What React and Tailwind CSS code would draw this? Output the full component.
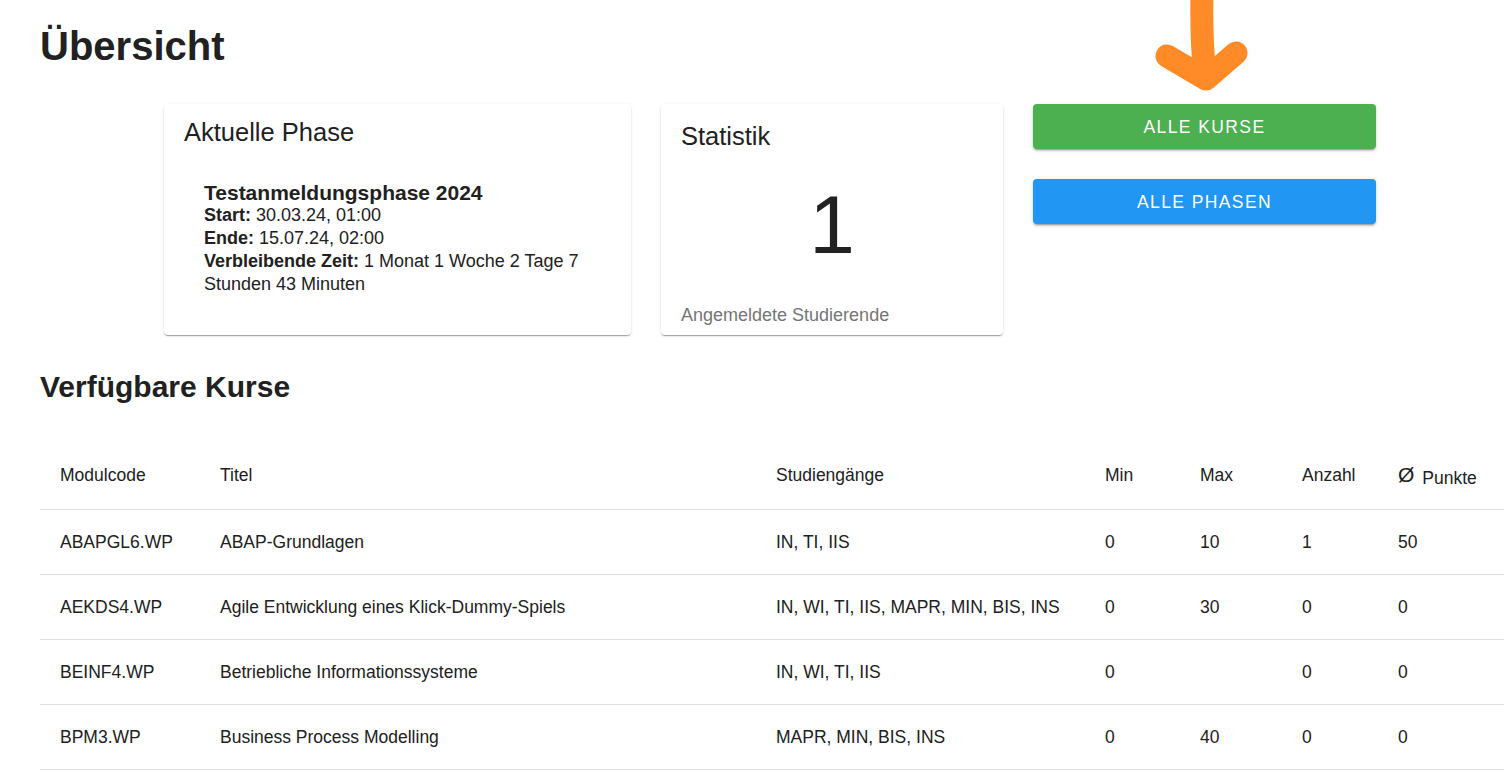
import React from 'react';

const courses = [
  { code: 'ABAPGL6.WP', title: 'ABAP-Grundlagen', programs: 'IN, TI, IIS', min: '0', max: '10', count: '1', points: '50' },
  { code: 'AEKDS4.WP', title: 'Agile Entwicklung eines Klick-Dummy-Spiels', programs: 'IN, WI, TI, IIS, MAPR, MIN, BIS, INS', min: '0', max: '30', count: '0', points: '0' },
  { code: 'BEINF4.WP', title: 'Betriebliche Informationssysteme', programs: 'IN, WI, TI, IIS', min: '0', max: '', count: '0', points: '0' },
  { code: 'BPM3.WP', title: 'Business Process Modelling', programs: 'MAPR, MIN, BIS, INS', min: '0', max: '40', count: '0', points: '0' },
];

const cardShadow = 'shadow-[0_2px_1px_-1px_rgba(0,0,0,0.2),0_1px_1px_0_rgba(0,0,0,0.14),0_1px_3px_0_rgba(0,0,0,0.12)]';

export default function App() {
  return (
    <div className="relative min-h-screen bg-white font-['Liberation_Sans',Arial,sans-serif] text-[#212121] overflow-hidden">
      {/* hand-drawn pointer */}
      <svg className="absolute left-[1140px] top-0 pointer-events-none" width="120" height="100" viewBox="1140 0 120 100">
        <path d="M1202 -6 Q1201 40 1205 76" fill="none" stroke="#ff8a28" strokeWidth="23" strokeLinecap="round" />
        <path d="M1167 56 L1206 79 L1236 53" fill="none" stroke="#ff8a28" strokeWidth="23" strokeLinecap="round" strokeLinejoin="round" />
      </svg>

      <div className="pl-10 pt-[22px]">
        <h1 className="text-[40px] leading-[48px] font-bold">Übersicht</h1>

        <div className="flex items-start gap-[30px] ml-[124px] mt-[34px]">
          <div className={`w-[467px] h-[231px] rounded bg-white px-5 pt-4 ${cardShadow}`}>
            <div className="text-[25.5px] leading-[24px]">Aktuelle Phase</div>
            <div className="mt-[37px] pl-5 text-[18px] leading-[23px]">
              <div className="text-[21px] font-bold">Testanmeldungsphase 2024</div>
              <div><span className="font-bold">Start:</span> 30.03.24, 01:00</div>
              <div><span className="font-bold">Ende:</span> 15.07.24, 02:00</div>
              <div><span className="font-bold">Verbleibende Zeit:</span> 1 Monat 1 Woche 2 Tage 7 Stunden 43 Minuten</div>
            </div>
          </div>

          <div className={`w-[342px] h-[231px] rounded bg-white px-5 pt-5 pb-2 flex flex-col ${cardShadow}`}>
            <div className="text-[25.5px] leading-[24px]">Statistik</div>
            <div className="mt-[36px] text-[82px] leading-[82px] text-center">1</div>
            <div className="mt-auto text-[18px] leading-[24px] text-[#757575]">Angemeldete Studierende</div>
          </div>

          <div className="w-[343px] flex flex-col gap-[30px]">
            <button className="h-[45px] pt-[2px] rounded bg-[#4caf50] text-white text-[17.5px] tracking-[1.4px] uppercase shadow-[0_3px_1px_-2px_rgba(0,0,0,0.2),0_2px_2px_0_rgba(0,0,0,0.14),0_1px_5px_0_rgba(0,0,0,0.12)]">
              Alle Kurse
            </button>
            <button className="h-[45px] pt-[2px] rounded bg-[#2196f3] text-white text-[17.5px] tracking-[1.4px] uppercase shadow-[0_3px_1px_-2px_rgba(0,0,0,0.2),0_2px_2px_0_rgba(0,0,0,0.14),0_1px_5px_0_rgba(0,0,0,0.12)]">
              Alle Phasen
            </button>
          </div>
        </div>

        <h2 className="mt-[34px] text-[30px] leading-[36px] font-bold">Verfügbare Kurse</h2>

        <table className="mt-[36px] w-[1464px] table-fixed border-collapse text-[17.5px] leading-[24px]">
          <colgroup>
            <col className="w-[160px]" />
            <col className="w-[556px]" />
            <col className="w-[329px]" />
            <col className="w-[95px]" />
            <col className="w-[102px]" />
            <col className="w-[96px]" />
            <col className="w-[126px]" />
          </colgroup>
          <thead>
            <tr className="h-[68px] border-b border-[#e0e0e0]">
              <th className="px-5 text-left font-normal align-middle">Modulcode</th>
              <th className="px-5 text-left font-normal align-middle">Titel</th>
              <th className="px-5 text-left font-normal align-middle">Studiengänge</th>
              <th className="px-5 text-left font-normal align-middle">Min</th>
              <th className="px-5 text-left font-normal align-middle">Max</th>
              <th className="px-5 text-left font-normal align-middle">Anzahl</th>
              <th className="px-5 text-left font-normal align-middle whitespace-nowrap">
                <div className="flex items-center gap-2">
                  <span className="text-[21px] leading-none">Ø</span>
                  <span className="mt-[7px]">Punkte</span>
                </div>
              </th>
            </tr>
          </thead>
          <tbody>
            {courses.map((c) => (
              <tr key={c.code} className="h-[65px] border-b border-[#e0e0e0]">
                <td className="px-5 align-middle">{c.code}</td>
                <td className="px-5 align-middle">{c.title}</td>
                <td className="px-5 align-middle whitespace-nowrap">{c.programs}</td>
                <td className="px-5 align-middle">{c.min}</td>
                <td className="px-5 align-middle">{c.max}</td>
                <td className="px-5 align-middle">{c.count}</td>
                <td className="px-5 align-middle">{c.points}</td>
              </tr>
            ))}
          </tbody>
        </table>
      </div>
    </div>
  );
}
